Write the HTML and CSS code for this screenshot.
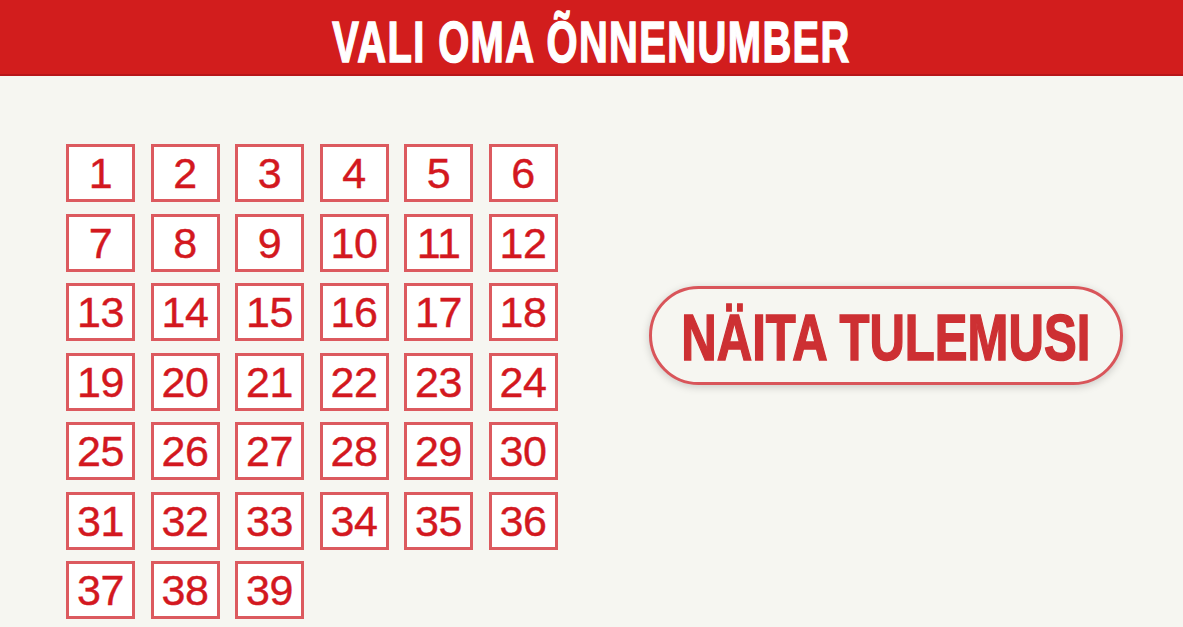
FILE: index.html
```html
<!DOCTYPE html>
<html lang="et">
<head>
    <meta charset="UTF-8">
    <meta name="viewport" content="width=device-width, initial-scale=1.0">
    <title>Vali oma õnnenumber</title>
    <link rel="stylesheet" href="styles.css">
</head>
<body>
    <h1 class="top"><span>VALI OMA ÕNNENUMBER</span></h1>
    <section class="wrap">
        <ul class="numbers">
            <li>1</li><li>2</li><li>3</li><li>4</li><li>5</li><li>6</li>
            <li>7</li><li>8</li><li>9</li><li>10</li><li>11</li><li>12</li>
            <li>13</li><li>14</li><li>15</li><li>16</li><li>17</li><li>18</li>
            <li>19</li><li>20</li><li>21</li><li>22</li><li>23</li><li>24</li>
            <li>25</li><li>26</li><li>27</li><li>28</li><li>29</li><li>30</li>
            <li>31</li><li>32</li><li>33</li><li>34</li><li>35</li><li>36</li>
            <li>37</li><li>38</li><li>39</li>
        </ul>
        <button class="result"><span>NÄITA TULEMUSI</span></button>
    </section>
</body>
</html>
```

FILE: styles.css
```css
*{margin:0; padding:0; box-sizing:border-box;}
li{list-style:none;}
html, body{height:100%;}
body{background-color:#f6f6f1; font-family:"Liberation Sans", Arial, sans-serif; overflow:hidden;}

/* red title bar */
.top{height:76px; background-color:#d21d1d; border-bottom:2px solid #b7161a; text-align:center; line-height:84px; font-size:57px; color:#FFF; font-weight:bold; overflow:hidden;}
.top span{display:inline-block; transform:scaleX(0.7); transform-origin:center; letter-spacing:2px; -webkit-text-stroke:1.5px #FFF;}

.wrap{display:flex; align-items:flex-start; padding:68px 0 0 66px;}

/* number grid */
.numbers{display:grid; grid-template-columns:repeat(6, 69px); grid-auto-rows:58px; column-gap:15.5px; row-gap:11.5px;}
.numbers li{background-color:#FFF; border:3px solid #dc5a5f; color:#d3181f; font-size:43px; line-height:52px; text-align:center; letter-spacing:-0.5px; -webkit-text-stroke:0.4px #d3181f;}

/* result button */
.result{display:flex; justify-content:center; align-items:center; margin:142px 0 0 91px; width:474px; height:99px; border:3px solid #d9555a; border-radius:50px; background-color:#f6f6f1; box-shadow:0 2px 8px rgba(0,0,0,0.18); color:#cd3033; font-family:"Liberation Sans", Arial, sans-serif; font-weight:bold; font-size:65px; line-height:1; cursor:pointer;}
.result span{display:block; flex:none; transform:scaleX(0.755); white-space:nowrap; -webkit-text-stroke:1.5px #cd3033; margin-top:3px;}
```
